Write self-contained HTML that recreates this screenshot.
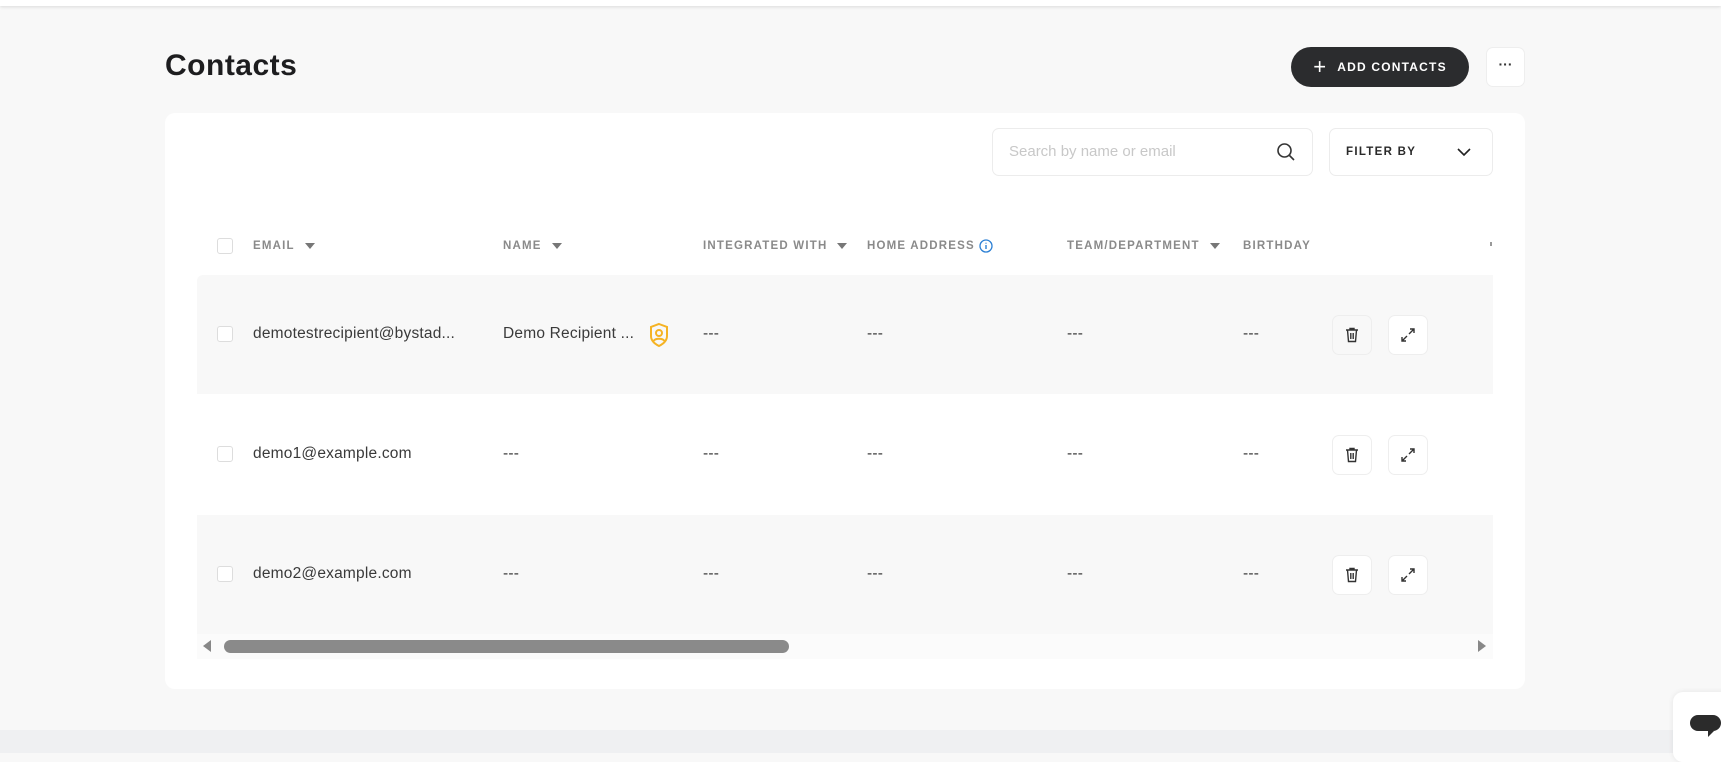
<!DOCTYPE html>
<html><head><meta charset="utf-8"><style>
*{box-sizing:border-box;margin:0;padding:0}
body{width:1721px;height:753px;background:#f8f8f8;font-family:"Liberation Sans",sans-serif;position:relative;overflow:hidden;color:#3a3a3a}
.a{position:absolute}
.top{left:0;top:0;width:1721px;height:6px;background:#fff;box-shadow:0 1px 3px rgba(0,0,0,.12)}
h1{position:absolute;left:165px;top:49px;font-size:30px;font-weight:bold;color:#1d1d1f;letter-spacing:.5px}
.add{left:1291px;top:47px;width:178px;height:40px;border-radius:20px;background:#2b2c2e;color:#fff;font-size:12px;font-weight:bold;letter-spacing:1.2px;display:flex;align-items:center;justify-content:center;gap:10px}
.more{left:1486px;top:47px;width:39px;height:40px;border-radius:7px;background:#fff;border:1px solid #eee;text-align:center;line-height:32px;font-weight:bold;font-size:14px;color:#333}
.card{left:165px;top:113px;width:1360px;height:576px;background:#fff;border-radius:10px}
.search{left:992px;top:128px;width:321px;height:48px;border:1px solid #ececec;border-radius:7px;font-size:15px;color:#c8c8c8;padding:14px 16px}
.filter{left:1329px;top:128px;width:164px;height:48px;border:1px solid #ececec;border-radius:7px;font-size:11.5px;font-weight:bold;letter-spacing:1.3px;color:#2a2a2a;padding:17px 16px}
.cb{width:16px;height:16px;border:1px solid #ddd;border-radius:3px;background:#fff}
.hd{top:239px;height:14px;font-size:11.5px;font-weight:bold;letter-spacing:1.2px;color:#8a8a8a;display:flex;align-items:center;white-space:nowrap}
.tri{display:inline-block;width:0;height:0;border-left:5px solid transparent;border-right:5px solid transparent;border-top:6px solid #777;margin-left:10px}
.row{left:197px;width:1296px;height:120px}
.t{font-size:15.5px;color:#3a3a3a;letter-spacing:.2px}
.ib{width:40px;height:40px;border:1px solid #eee;border-radius:7px;display:flex;align-items:center;justify-content:center}
</style></head><body>
<div class="a top"></div>
<h1>Contacts</h1>
<div class="a add"><span style="font-size:22px;font-weight:normal;line-height:1">+</span>ADD CONTACTS</div>
<div class="a more">···</div>
<div class="a card"></div>
<div class="a search">Search by name or email
<svg class="a" style="left:283px;top:13px" width="20" height="20" viewBox="0 0 20 20"><circle cx="8.5" cy="8.5" r="6.5" fill="none" stroke="#333" stroke-width="1.6"/><path d="M13.5 13.5L18 18" stroke="#333" stroke-width="1.6"/></svg></div>
<div class="a filter">FILTER BY
<svg class="a" style="left:127px;top:19px" width="14" height="9" viewBox="0 0 14 9"><path d="M1 1l6 6 6-6" fill="none" stroke="#222" stroke-width="1.6"/></svg></div>

<div class="a row" style="top:275px;height:119px;background:#f8f8f8;border-radius:6px 0 0 0"></div>
<div class="a row" style="top:515px;height:119px;background:#f8f8f8"></div>
<div class="a" style="left:197px;top:634px;width:1296px;height:25px;background:#fbfbfb"></div>
<div class="a" style="left:224px;top:640px;width:565px;height:13px;border-radius:7px;background:#8a8a8a"></div>
<div class="a" style="left:203px;top:640px;width:0;height:0;border-top:6px solid transparent;border-bottom:6px solid transparent;border-right:8px solid #888"></div>
<div class="a" style="left:1478px;top:640px;width:0;height:0;border-top:6px solid transparent;border-bottom:6px solid transparent;border-left:8px solid #888"></div>

<div class="a cb" style="left:217px;top:238px"></div>
<div class="a hd" style="left:253px">EMAIL<span class="tri"></span></div>
<div class="a hd" style="left:503px">NAME<span class="tri"></span></div>
<div class="a hd" style="left:703px">INTEGRATED WITH<span class="tri"></span></div>
<div class="a hd" style="left:867px">HOME ADDRESS&nbsp;<svg width="14" height="14" viewBox="0 0 14 14"><circle cx="7" cy="7" r="6" fill="none" stroke="#2b7fd4" stroke-width="1.3"/><path d="M7 6v4M7 3.8v.8" stroke="#2b7fd4" stroke-width="1.4"/></svg></div>
<div class="a hd" style="left:1067px">TEAM/DEPARTMENT<span class="tri"></span></div>
<div class="a hd" style="left:1243px">BIRTHDAY</div>

<div class="a cb" style="left:217px;top:326px"></div>
<div class="a t" style="left:253px;top:325px">demotestrecipient@bystad...</div>
<div class="a t" style="left:503px;top:325px">Demo Recipient ...</div>
<svg class="a" style="left:648px;top:322px" width="22" height="26" viewBox="0 0 22 26"><path d="M11 2l8 3v9c0 5-4 8-8 10-4-2-8-5-8-10V5z" fill="none" stroke="#f5b324" stroke-width="2"/><circle cx="11" cy="11" r="3" fill="none" stroke="#f5b324" stroke-width="2"/><path d="M5.5 19c2-3 9-3 11 0" fill="none" stroke="#f5b324" stroke-width="2"/></svg>

<div class="a cb" style="left:217px;top:446px"></div>
<div class="a t" style="left:253px;top:445px">demo1@example.com</div>
<div class="a cb" style="left:217px;top:566px"></div>
<div class="a t" style="left:253px;top:565px">demo2@example.com</div>

<div class="a t" style="left:703px;top:325px">---</div><div class="a t" style="left:867px;top:325px">---</div><div class="a t" style="left:1067px;top:325px">---</div><div class="a t" style="left:1243px;top:325px">---</div>
<div class="a t" style="left:503px;top:445px">---</div><div class="a t" style="left:703px;top:445px">---</div><div class="a t" style="left:867px;top:445px">---</div><div class="a t" style="left:1067px;top:445px">---</div><div class="a t" style="left:1243px;top:445px">---</div>
<div class="a t" style="left:503px;top:565px">---</div><div class="a t" style="left:703px;top:565px">---</div><div class="a t" style="left:867px;top:565px">---</div><div class="a t" style="left:1067px;top:565px">---</div><div class="a t" style="left:1243px;top:565px">---</div>

<div class="a ib" style="left:1332px;top:315px"><svg width="14" height="16" viewBox="0 0 14 16"><path d="M1 3h12M5 3V1.5h4V3M2.5 3l1 11.5h7l1-11.5M5.8 6v6M8.2 6v6" fill="none" stroke="#333" stroke-width="1.4"/></svg></div>
<div class="a ib" style="left:1388px;top:315px;background:#fff"><svg width="14" height="14" viewBox="0 0 14 14"><path d="M8 6l5-5M9 1h4v4M6 8l-5 5M1 9v4h4" fill="none" stroke="#333" stroke-width="1.4"/></svg></div>
<div class="a ib" style="left:1332px;top:435px;background:#fff"><svg width="14" height="16" viewBox="0 0 14 16"><path d="M1 3h12M5 3V1.5h4V3M2.5 3l1 11.5h7l1-11.5M5.8 6v6M8.2 6v6" fill="none" stroke="#333" stroke-width="1.4"/></svg></div>
<div class="a ib" style="left:1388px;top:435px;background:#fff"><svg width="14" height="14" viewBox="0 0 14 14"><path d="M8 6l5-5M9 1h4v4M6 8l-5 5M1 9v4h4" fill="none" stroke="#333" stroke-width="1.4"/></svg></div>
<div class="a ib" style="left:1332px;top:555px;background:#fff"><svg width="14" height="16" viewBox="0 0 14 16"><path d="M1 3h12M5 3V1.5h4V3M2.5 3l1 11.5h7l1-11.5M5.8 6v6M8.2 6v6" fill="none" stroke="#333" stroke-width="1.4"/></svg></div>
<div class="a ib" style="left:1388px;top:555px;background:#fff"><svg width="14" height="14" viewBox="0 0 14 14"><path d="M8 6l5-5M9 1h4v4M6 8l-5 5M1 9v4h4" fill="none" stroke="#333" stroke-width="1.4"/></svg></div>
<div class="a" style="left:1490px;top:242px;width:2px;height:4px;background:#999"></div>

<div class="a" style="left:0;top:730px;width:1721px;height:23px;background:#eff0f2"></div>
<div class="a" style="left:1673px;top:692px;width:60px;height:70px;background:#fff;border-radius:10px;box-shadow:0 0 6px rgba(0,0,0,.08)"></div>
<div class="a" style="left:1690px;top:715px;width:31px;height:16px;border-radius:8px;background:#2b2b2b"></div>
<div class="a" style="left:1708px;top:731px;width:0;height:0;border-left:6px solid #2b2b2b;border-bottom:6px solid transparent"></div>
</body></html>
